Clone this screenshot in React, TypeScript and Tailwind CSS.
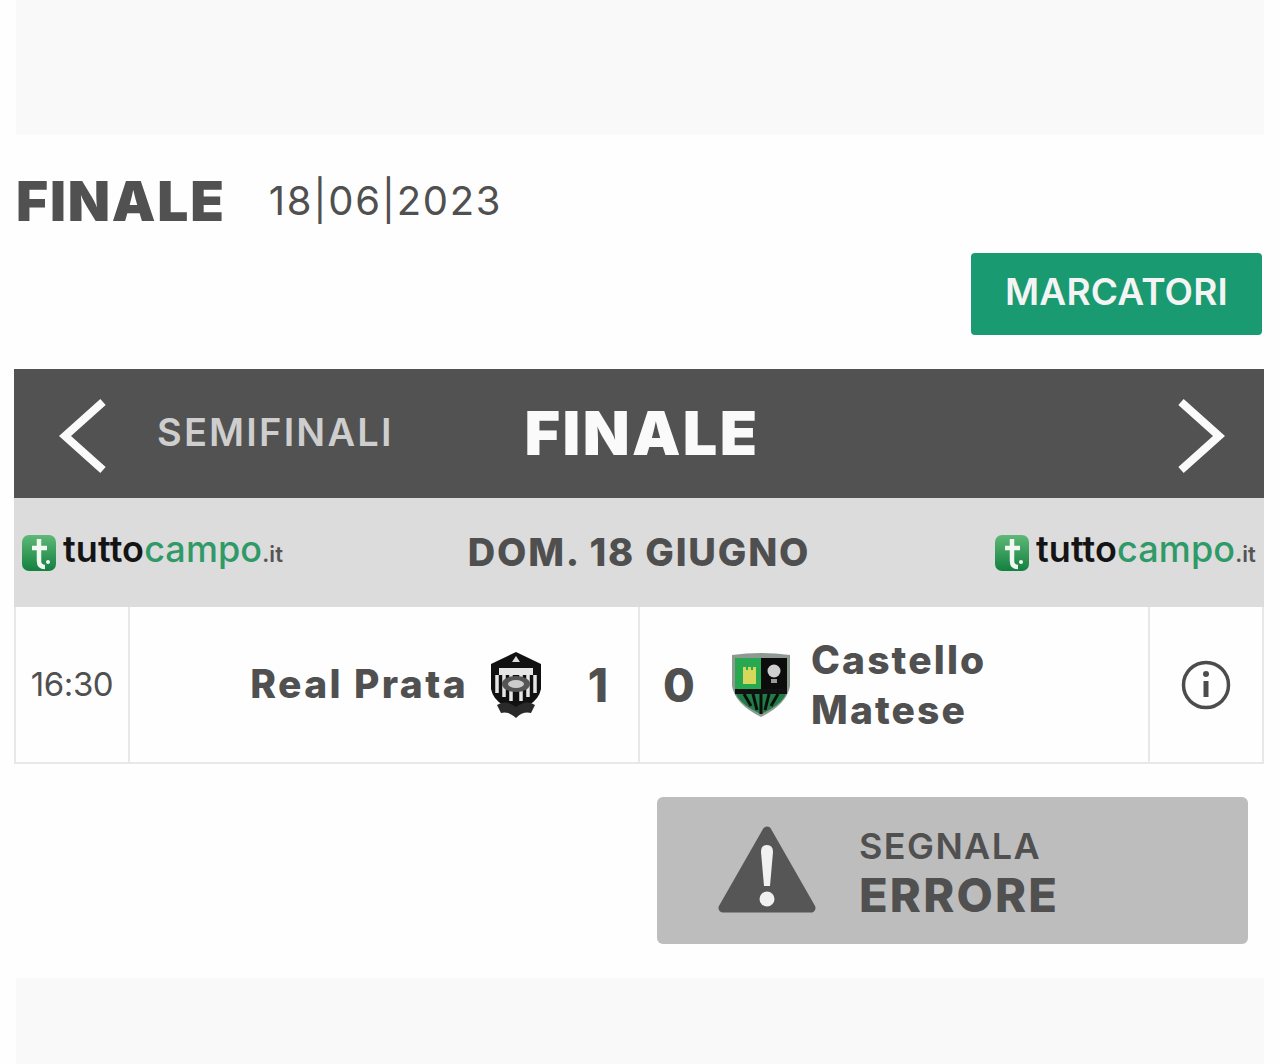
import React from "react";

const font = { fontFamily: "Inter, 'Liberation Sans', sans-serif" };

function Chevron({ dir }: { dir: "l" | "r" }) {
  return (
    <svg width="50" height="76" viewBox="0 0 50 76" fill="none" className="block mt-[4px]">
      <path
        d={dir === "l" ? "M45 4 L7 38 L45 72" : "M5 4 L43 38 L5 72"}
        stroke="#fafafa"
        strokeWidth="8"
      />
    </svg>
  );
}

function TLogo({ id }: { id: string }) {
  return (
    <div className="flex items-center shrink-0">
      <svg width="36" height="38" viewBox="0 0 36 38" className="block blur-[0.4px]">
        <defs>
          <linearGradient id={id} x1="0" y1="0" x2="0" y2="1">
            <stop offset="0" stopColor="#5fb878" />
            <stop offset="1" stopColor="#12803f" />
          </linearGradient>
        </defs>
        <rect x="0" y="1" width="34" height="36" rx="7" fill={`url(#${id})`} />
        <path d="M17 5 V27 Q17 33 23 33 M10 14 H25" stroke="#f2f7f2" strokeWidth="4.5" fill="none" />
        <circle cx="26" cy="28" r="2" fill="#f2f7f2" />
      </svg>
      <span className="ml-[5px] text-[36px] font-semibold leading-none tracking-[0.1px] text-[#141414] -translate-y-[4px]">
        tutto
        <span className="font-medium text-[#2f9a68]">campo</span>
        <span className="text-[22px] text-[#555]">.it</span>
      </span>
    </div>
  );
}

function CrestPrata() {
  return (
    <svg width="54" height="68" viewBox="0 0 54 68" className="block blur-[0.6px]">
      <path d="M27 1 L52 13 V38 Q50 48 40 54 L27 62 L14 54 Q4 48 2 38 V13 Z" fill="#111" />
      <path d="M27 5 L31 11 H23 Z" fill="#ddd" />
      <path d="M10 17 H44 V24 H10 Z" fill="#e6e6e6" />
      <path d="M8 24 V42 M15 24 V46 M22 24 V50 M32 24 V50 M39 24 V46 M46 24 V42" stroke="#e6e6e6" strokeWidth="3.5" />
      <ellipse cx="27" cy="33" rx="14" ry="8" fill="#555" />
      <ellipse cx="27" cy="33" rx="8" ry="4" fill="#ccc" />
      <path d="M8 54 Q16 48 27 56 Q38 48 46 54 L42 62 Q34 60 27 67 Q20 60 12 62 Z" fill="#2a2a2a" />
    </svg>
  );
}

function CrestCastello() {
  return (
    <svg width="60" height="66" viewBox="0 0 60 66" className="block blur-[0.6px]">
      <path d="M1 3 Q30 -1 59 3 V34 Q56 52 30 65 Q4 52 1 34 Z" fill="#8d9a92" />
      <path d="M4 6 H30 V37 H4 Z" fill="#28a850" />
      <path d="M30 6 H56 V37 H30 Z" fill="#0c0c0c" />
      <path d="M12 15 H15 V18 H17 V15 H20 V18 H22 V15 H25 V32 H12 Z" fill="#d5d85a" />
      <circle cx="43" cy="19" r="6.5" fill="#cfcfcf" />
      <path d="M40 27 H46 V31 H40 Z" fill="#9a9a9a" />
      <path d="M4 37 H56 V42 H4 Z" fill="#111" />
      <path d="M5 42 H55 Q50 53 30 62 Q10 53 5 42 Z" fill="#1f7d45" />
      <path d="M13 42 L20 54 M22 42 L26 58 M30 42 V62 M38 42 L34 58 M47 42 L40 54" stroke="#0d0d0d" strokeWidth="3" />
    </svg>
  );
}

function Warning() {
  return (
    <svg width="98" height="90" viewBox="0 0 98 90" className="block">
      <path d="M49 5 L93 82 H5 Z" fill="#565656" stroke="#565656" strokeWidth="9" strokeLinejoin="round" />
      <path d="M43 26 Q43 19 49 19 Q55 19 55 26 L52 60 H46 Z" fill="#f1f1f1" />
      <circle cx="49" cy="73" r="7.5" fill="#f1f1f1" />
    </svg>
  );
}

function Info() {
  return (
    <svg width="50" height="50" viewBox="0 0 50 50" fill="none" className="block">
      <circle cx="25" cy="25" r="22.5" stroke="#4c4c4c" strokeWidth="3.5" />
      <circle cx="25" cy="14" r="3" fill="#4c4c4c" />
      <path d="M25 21 V37" stroke="#4c4c4c" strokeWidth="5" />
    </svg>
  );
}

export default function App() {
  return (
    <div style={font} className="w-[1280px] h-[1064px] overflow-hidden bg-[#fefefe] flex flex-col">
      <div className="h-[135px] mx-4 bg-[#f9f9f9] shrink-0" />

      <div className="flex items-center h-[132px] pl-4 shrink-0">
        <div className="text-[55px] font-black leading-none text-[#515151] tracking-[1.8px]">FINALE</div>
        <div className="ml-[43px] text-[40px] font-normal leading-none text-[#505050] tracking-[1.7px]">18|06|2023</div>
      </div>

      <div className="flex justify-end pr-[18px] shrink-0 -mt-[14px]">
        <div className="w-[291px] h-[82px] pb-[4px] rounded-[4px] bg-[#1a9a70] flex items-center justify-center text-[37px] font-semibold tracking-[0.2px] text-[#f4f4f4]">
          MARCATORI
        </div>
      </div>

      <div className="ml-[14px] mr-4 mt-[34px] shrink-0">
        <div className="h-[129px] bg-[#525252] grid grid-cols-[1fr_auto_1fr] items-center">
          <div className="flex items-center pl-[44px]">
            <Chevron dir="l" />
            <span className="ml-[49px] pb-[3px] text-[38px] font-semibold tracking-[2.2px] text-[#cecece] leading-none">SEMIFINALI</span>
          </div>
          <div className="text-[61px] font-black tracking-[2.4px] text-[#fafafa] leading-none ml-[6px]">FINALE</div>
          <div className="flex justify-end pr-[38px]">
            <Chevron dir="r" />
          </div>
        </div>

        <div className="h-[109px] bg-[#dcdcdc] flex items-center justify-between px-[8px]">
          <TLogo id="tg1" />
          <div className="text-[38px] font-extrabold tracking-[1.8px] pb-[2px] text-[#4f4f4f] leading-none">DOM. 18 GIUGNO</div>
          <TLogo id="tg2" />
        </div>

        <div className="h-[157px] grid grid-cols-[114px_510px_510px_1fr] border-b-2 border-[#e8e8e8] border-l-2 border-r-2">
          <div className="flex items-center justify-center border-r-2 border-[#e8e8e8] text-[33px] tracking-[-0.4px] text-[#505050]">
            16:30
          </div>
          <div className="flex items-center justify-end border-r-2 border-[#e8e8e8] pr-[27px]">
            <span className="text-[39px] font-extrabold tracking-[2.4px] text-[#505050] leading-none whitespace-nowrap pb-[2px]">Real Prata</span>
            <div className="ml-[21px]"><CrestPrata /></div>
            <span className="ml-[42px] text-[46px] font-extrabold text-[#505050] leading-none w-[26px] text-center">1</span>
          </div>
          <div className="flex items-center border-r-2 border-[#e8e8e8] pl-[23px]">
            <span className="text-[46px] font-extrabold text-[#505050] leading-none w-[32px] text-center">0</span>
            <div className="ml-[36px]"><CrestCastello /></div>
            <span className="ml-[20px] text-[39px] font-extrabold tracking-[2.1px] text-[#505050] leading-[50px]">
              Castello
              <br />
              Matese
            </span>
          </div>
          <div className="flex items-center justify-center">
            <Info />
          </div>
        </div>
      </div>

      <div className="flex justify-end pr-[32px] mt-[33px] shrink-0">
        <div className="w-[591px] h-[147px] rounded-[6px] bg-[#bdbdbd] flex items-center pl-[61px]">
          <Warning />
          <div className="ml-[43px] pt-[3px] flex flex-col text-[#505050]">
            <span className="text-[36px] font-semibold tracking-[1.4px] leading-[46px]">SEGNALA</span>
            <span className="text-[47px] font-extrabold tracking-[2.2px] leading-[52px]">ERRORE</span>
          </div>
        </div>
      </div>

      <div className="mx-4 mt-[34px] flex-1 bg-[#f9f9f9]" />
    </div>
  );
}
